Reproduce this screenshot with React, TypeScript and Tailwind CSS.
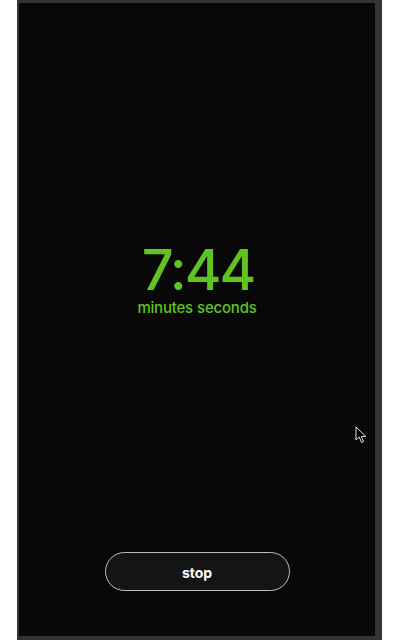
import React from "react";

export default function App() {
  return (
    <div className="relative w-[400px] h-[640px] bg-white overflow-hidden">
      <div className="ml-[17px] w-[365px] h-[640px] bg-[#333333] pt-[3px] pl-[2px] pr-[7px] pb-[4px]">
        <div className="h-full bg-[#080808] flex flex-col items-center" style={{ fontFamily: "Inter, 'Noto Sans', sans-serif" }}>
          <div className="mt-[243px] flex flex-col items-center">
            <div className="text-[56px] leading-[48px] font-medium tracking-[-2px] text-[#60c322] pl-[2px]">7:44</div>
            <div className="mt-[5px] flex gap-[4px] text-[15px] leading-[18px] font-medium tracking-[-0.2px] text-[#60c322]">
              <span>minutes</span>
              <span>seconds</span>
            </div>
          </div>
          <div className="flex-1" />
          <button className="mb-[45px] w-[185px] h-[39px] rounded-full border border-[#bdbdbd] bg-[#141414] text-white text-[14px] font-bold pt-[2px]">
            stop
          </button>
        </div>
      </div>
      <svg className="absolute left-[355px] top-[426px]" width="13" height="18" viewBox="0 0 13 18">
        <path d="M1 1 L1 14 L4.2 11 L6.6 16.5 L8.6 15.6 L6.3 10.4 L10.8 10.4 Z" fill="#000" stroke="#e5e5e5" strokeWidth="1" strokeLinejoin="miter" />
      </svg>
    </div>
  );
}
